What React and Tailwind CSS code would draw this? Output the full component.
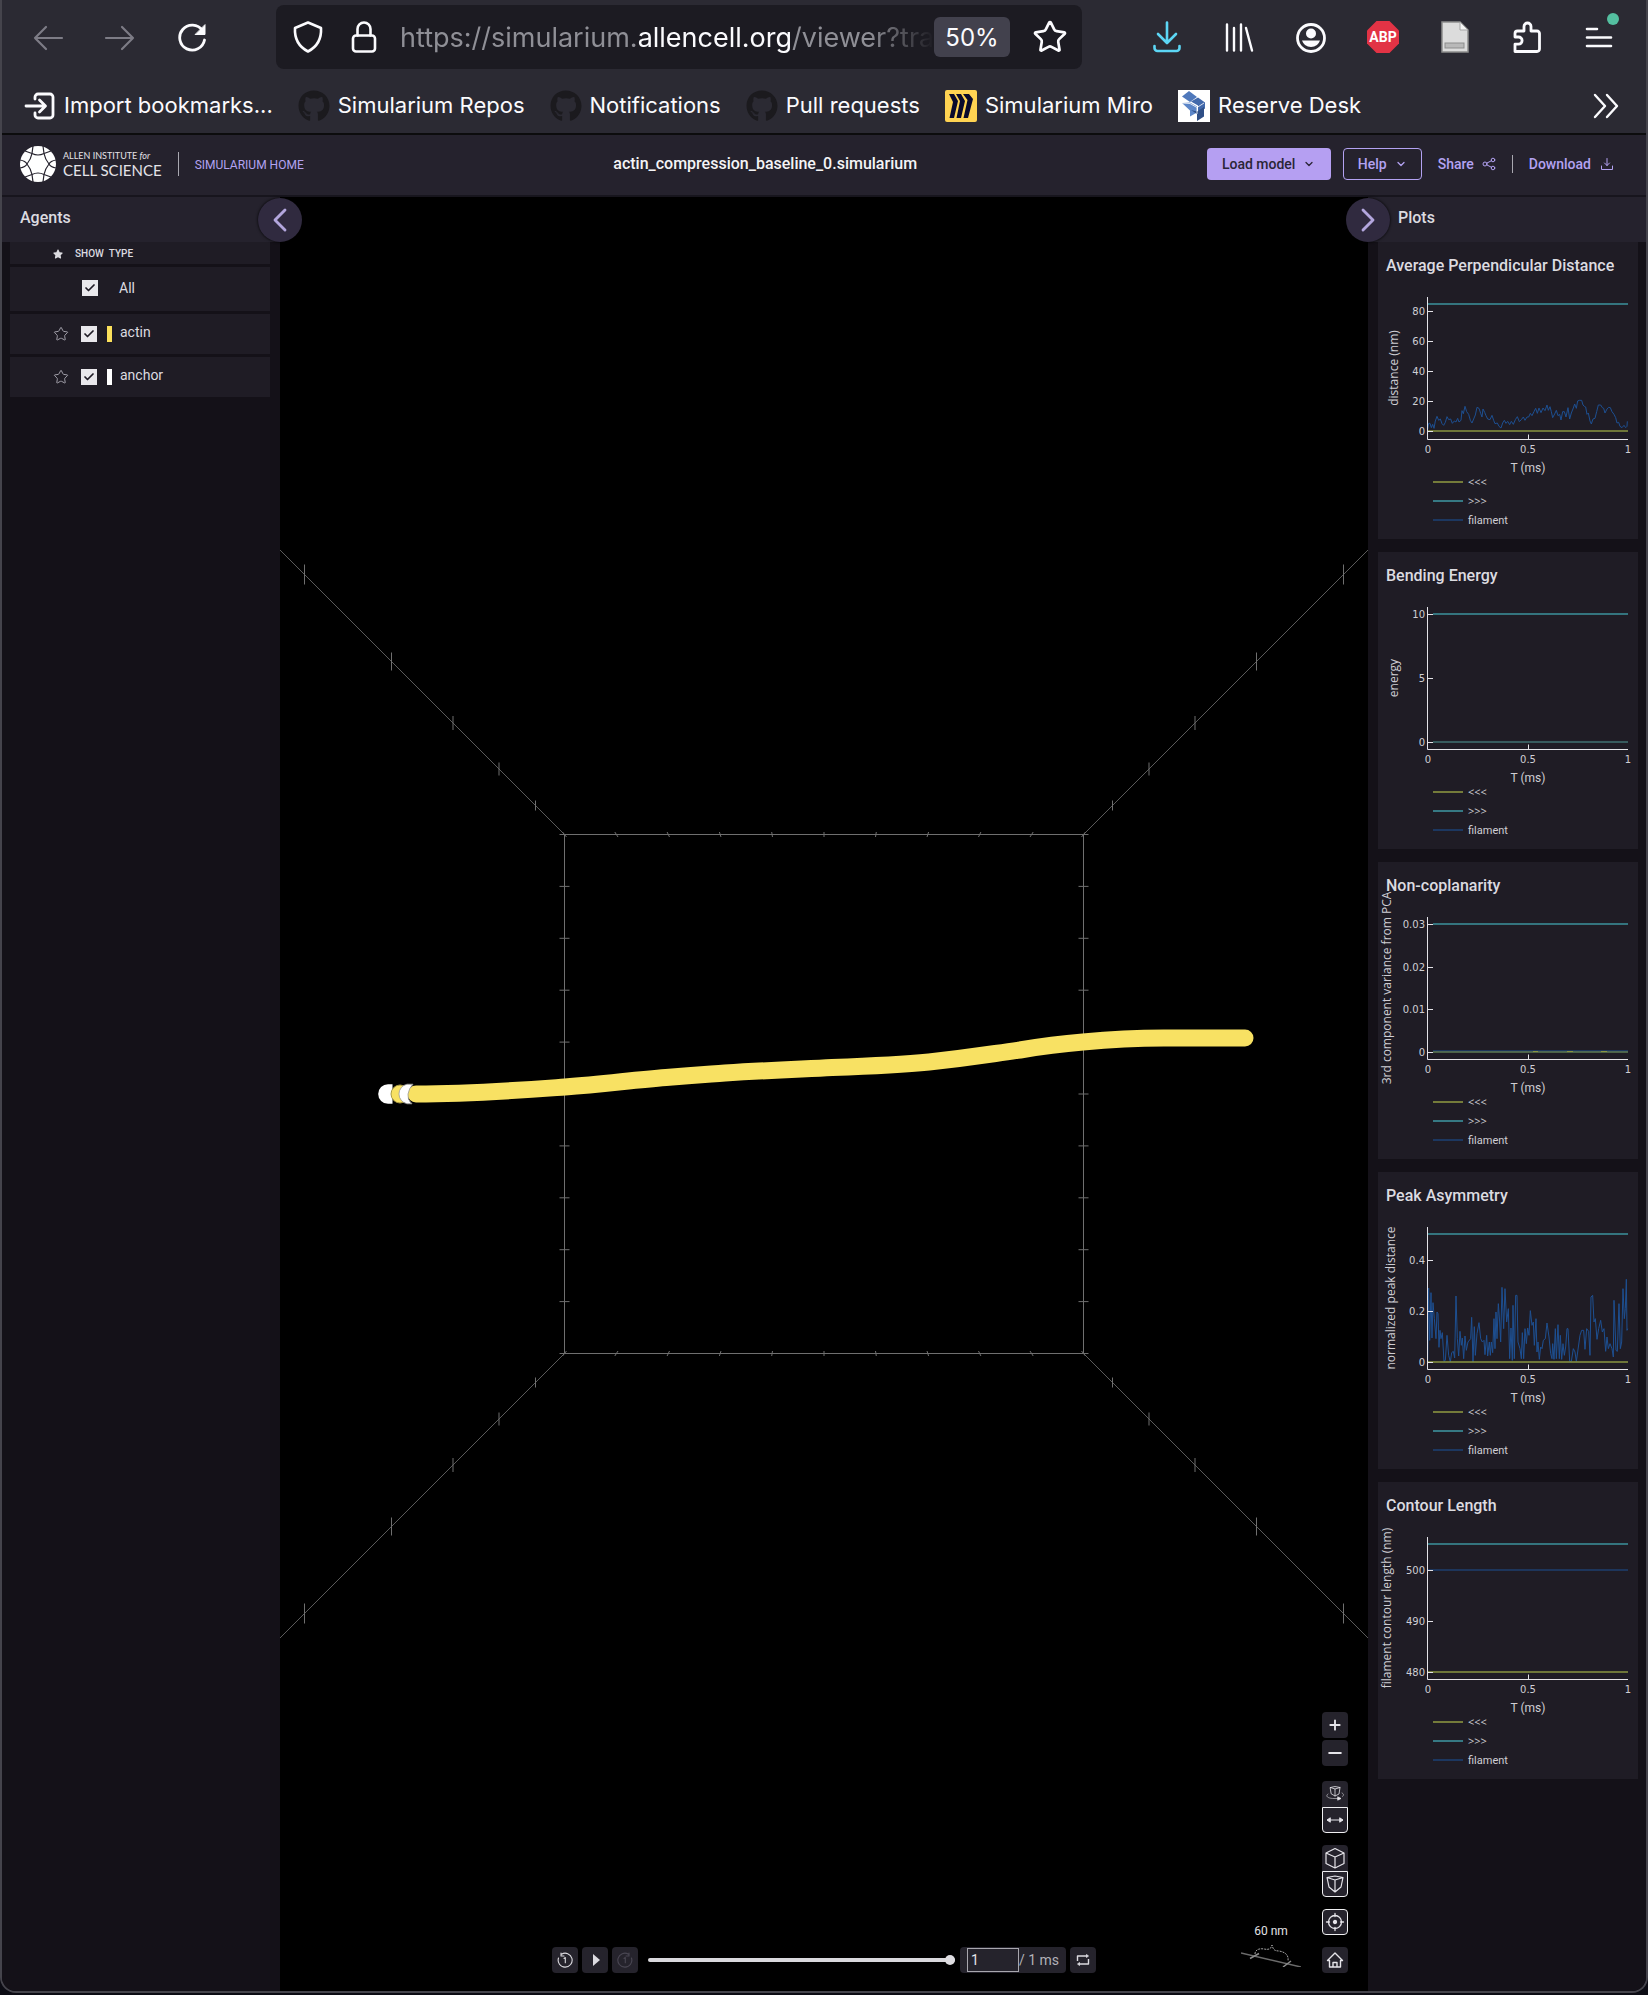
import React from "react";
import { Star, Check, ChevronDown, ChevronLeft, ChevronRight, Plus, Minus } from "lucide-react";
import { FaStar, FaGithub } from "react-icons/fa";

const stroke = { fill: "none", stroke: "currentColor", strokeLinecap: "round", strokeLinejoin: "round" };

/* ---------- browser chrome ---------- */

function IconButton({ label, className = "", color = "text-[#fbfbfe]", children }) {
  return (
    <button type="button" aria-label={label} className={`relative flex size-8 shrink-0 items-center justify-center ${color} ${className}`}>
      {children}
    </button>
  );
}

function AddressBar() {
  return (
    <div className="ml-[68px] mr-[69px] flex h-16 min-w-0 flex-1 items-center rounded-lg bg-[#1c1b22] px-4">
      <IconButton label="Tracking protection">
        <svg viewBox="0 0 32 32" className="size-8" {...stroke} strokeWidth="2.6">
          <path d="M16 1.500 29 7c.6 10-3.500 18.500-13 23.500C6.500 25.500 2.400 17 3 7Z" />
        </svg>
      </IconButton>
      <IconButton label="Connection secure" className="ml-6">
        <svg viewBox="0 0 32 32" className="size-8" {...stroke} strokeWidth="2.6">
          <rect x="5" y="14.500" width="22" height="16" rx="3" />
          <path d="M9.500 14.500V8a6.500 6.500 0 0 1 13 0v6.500" />
        </svg>
      </IconButton>
      <div
        role="textbox"
        aria-label="Address"
        className="ml-5 min-w-0 flex-1 overflow-hidden whitespace-nowrap pt-[2px] text-[27px] leading-10 text-[#8f8f96] [mask-image:linear-gradient(to_right,black_88%,transparent)]"
      >
        https://simularium.<span className="text-[#fbfbfe]">allencell.org</span>/viewer?tra
      </div>
      <button type="button" className="h-10 w-[76px] shrink-0 rounded-md bg-[#42414d] pt-[2px] text-2xl text-[#fbfbfe]">50%</button>
      <IconButton label="Bookmark this page" className="ml-6">
        <Star className="size-9 shrink-0" strokeWidth={1.800} />
      </IconButton>
    </div>
  );
}

function Toolbar() {
  return (
    <div className="flex items-center pl-[30px] pr-[31px]">
      <div className="flex gap-10">
        <IconButton label="Back" color="text-[#7d7c86]">
          <svg viewBox="0 0 32 32" className="size-8" {...stroke} strokeWidth="2.200"><path d="M30 17H3M14 6 3 17l11 11" /></svg>
        </IconButton>
        <IconButton label="Forward" color="text-[#7d7c86]">
          <svg viewBox="0 0 32 32" className="size-8" {...stroke} strokeWidth="2.200"><path d="M2 17h27M18 6l11 11-11 11" /></svg>
        </IconButton>
        <IconButton label="Reload">
          <svg viewBox="0 0 32 32" className="size-8" {...stroke} strokeWidth="2.800">
            <path d="M26.500 9.500A12.500 12.500 0 1 0 28.500 19" />
            <path d="M29 4v9.500h-9.500Z" fill="currentColor" strokeWidth="1" />
          </svg>
        </IconButton>
      </div>
      <AddressBar />
      <div className="flex gap-10">
        <IconButton label="Downloads" color="text-[#5cd6f5]">
          <svg viewBox="0 0 32 32" className="size-8" {...stroke} strokeWidth="2.600">
            <path d="M16 1.500v20M7 13l9 9 9-9M3.500 25v2a3 3 0 0 0 3 3h19a3 3 0 0 0 3-3v-2" />
          </svg>
        </IconButton>
        <IconButton label="Library">
          <svg viewBox="0 0 32 32" className="size-8" {...stroke} strokeWidth="2.400">
            <path d="M4 3.500v26M11 7v22.500M18 3.500v26M23 7l6 22.500" />
          </svg>
        </IconButton>
        <IconButton label="Account">
          <svg viewBox="0 0 32 32" className="size-8">
            <circle cx="16" cy="17" r="13.500" fill="none" stroke="currentColor" strokeWidth="2.800" />
            <circle cx="16" cy="12.500" r="5" fill="currentColor" />
            <path d="M7 19.500h18a9.500 9.500 0 0 1-18 0Z" fill="currentColor" />
          </svg>
        </IconButton>
        <IconButton label="Adblock Plus">
          <svg viewBox="0 0 32 32" className="size-8">
            <path d="M9.500 0h13L32 9.500v13L22.500 32h-13L0 22.500v-13Z" fill="#e23345" />
            <text x="16" y="21" textAnchor="middle" fontSize="14" fontWeight="700" fill="#fff" fontFamily="'Roboto'">ABP</text>
          </svg>
        </IconButton>
        <IconButton label="Reader extension">
          <svg viewBox="0 0 32 32" className="size-8">
            <path d="M3 1h18l8 8v22H3Z" fill="#dcdcdc" stroke="#8d8d8d" strokeWidth="1.500" />
            <path d="M21 1v8h8Z" fill="#f6f6f6" stroke="#a5a5a5" />
            <rect x="6" y="22" width="19" height="5" fill="#b9b9b9" stroke="#8d8d8d" />
          </svg>
        </IconButton>
        <IconButton label="Extensions">
          <svg viewBox="0 0 32 32" className="size-8" {...stroke} strokeWidth="2.800">
            <path d="M4 30.500h22a2.500 2.500 0 0 0 2.500-2.500V12.500A2.500 2.500 0 0 0 26 10h-6V5.500a3.500 3.500 0 0 0-7 0V10H6.500A2.500 2.500 0 0 0 4 12.500V16h3.500a3.600 3.600 0 0 1 0 7.200H4Z" />
          </svg>
        </IconButton>
        <IconButton label="Open application menu">
          <svg viewBox="0 0 32 32" className="size-8" {...stroke} strokeWidth="2.600">
            <path d="M4 8h10M4 16.500h24M4 25h24" />
          </svg>
          <span className="absolute -right-1 -top-2 size-3 rounded-full bg-[#54bfa0]" />
        </IconButton>
      </div>
    </div>
  );
}

function MiroIcon() {
  return (
    <svg viewBox="0 0 32 32" className="size-8 shrink-0">
      <rect width="32" height="32" rx="2" fill="#ffd352" />
      <g fill="#0a0a2c">
        <path d="M4 4h5l4 7-4 17H4.500L8 12Z" />
        <path d="M11 4h5l4 7-4 17h-4.500L15 11Z" />
        <path d="M18 4h6l4 5-5 19h-4.500L22.500 10Z" />
      </g>
    </svg>
  );
}

function DeskIcon() {
  return (
    <svg viewBox="0 0 32 32" className="size-8 shrink-0">
      <rect width="32" height="32" fill="#fff" />
      <path d="m11 1 8 6-7 5-8-5.500Z" fill="#4f78bb" />
      <path d="m20 7.500 7 5v6l-7 5v-8l-7-4Z" fill="#4269ab" />
      <path d="m4 13 8-.500 7 4v6l-7 4v-6Z" fill="#5c86c8" />
      <path d="m13 20 6 4v7l7-4.500V17l-7 4.500Z" fill="#2f4f86" />
      <path d="m4 13 8 .500 7 4 7-4.500M19 17.500V24" stroke="#fff" strokeWidth=".8" fill="none" />
    </svg>
  );
}

function Bookmark({ icon, children }) {
  return (
    <a href="#" className="flex items-center gap-2 whitespace-nowrap">
      {icon}
      <span>{children}</span>
    </a>
  );
}

function Bookmarks() {
  const github = <FaGithub className="size-8 shrink-0 text-[#1b1a1e]" />;
  return (
    <nav aria-label="Bookmarks" className="mt-1 flex h-15 items-center gap-[25px] pl-[22px] pr-[26px] pt-[5px] text-[22px] text-[#fbfbfe]">
      <Bookmark
        icon={
          <svg viewBox="0 0 32 32" className="size-8 shrink-0" {...stroke} strokeWidth="2.800">
            <path d="M11 9V7a3 3 0 0 1 3-3h12a3 3 0 0 1 3 3v18a3 3 0 0 1-3 3H14a3 3 0 0 1-3-3v-2M2 16h19M15.500 10l6 6-6 6" />
          </svg>
        }
      >
        Import bookmarks...
      </Bookmark>
      <Bookmark icon={github}>Simularium Repos</Bookmark>
      <Bookmark icon={github}>Notifications</Bookmark>
      <Bookmark icon={github}>Pull requests</Bookmark>
      <Bookmark icon={<MiroIcon />}>Simularium Miro</Bookmark>
      <Bookmark icon={<DeskIcon />}>Reserve Desk</Bookmark>
      <button type="button" aria-label="More bookmarks" className="ml-auto">
        <svg viewBox="0 0 28 28" className="size-7" {...stroke} strokeWidth="2.400">
          <path d="M3 3l10 11L3 25M15 3l10 11-10 11" />
        </svg>
      </button>
    </nav>
  );
}

/* ---------- application header ---------- */

function AllenLogo() {
  return (
    <svg viewBox="0 0 36 36" className="size-9 shrink-0">
      <circle cx="18" cy="18" r="18" fill="#fff" />
      <g fill="none" stroke="#25222d" strokeWidth="1.200">
        <path d="M12 7.500Q18 10.500 24 7.500M12 28.500Q18 25.500 24 28.500" />
        <path d="M12 7.500Q11 13 7 18Q11 23 12 28.500M24 7.500Q25 13 29 18Q25 23 24 28.500" />
        <path d="M12 7.500 13 0M24 7.500 23 0M12 28.500 13 36M24 28.500 23 36" />
        <path d="M12 7.500 5 5M24 7.500 31 5M12 28.500 5 31M24 28.500 31 31" />
        <path d="M7 18Q5.500 15 0 14M7 18Q5.500 21 0 22M29 18Q30.500 15 36 14M29 18Q30.500 21 36 22" />
      </g>
    </svg>
  );
}

function AppHeader() {
  return (
    <header className="flex h-[62px] items-center border-b-2 border-[#17151d] bg-[#25222d] pb-[2px] pl-[18px] pr-[33px] text-sm text-[#b3a2f2]">
      <a href="#" className="flex items-center gap-[7px] font-['Lato'] text-[#e4e3e8]">
        <AllenLogo />
        <span className="flex flex-col whitespace-nowrap">
          <span className="text-[9px] leading-3">ALLEN INSTITUTE <i>for</i></span>
          <span className="text-[15px] leading-4">CELL SCIENCE</span>
        </span>
      </a>
      <span className="ml-4 h-6 w-px bg-[#a9a8b0]" />
      <a href="#" className="ml-4 whitespace-nowrap pt-[2px] text-xs">SIMULARIUM HOME</a>
      <h1 className="min-w-0 flex-1 truncate pl-5 text-center text-base font-medium text-[#f4f4f6]">actin_compression_baseline_0.simularium</h1>
      <button type="button" className="flex h-8 w-[124px] items-center justify-center gap-2 rounded-sm bg-[#b59ff2] font-medium text-[#2a2536]">
        Load model <ChevronDown className="size-3" strokeWidth={2.600} />
      </button>
      <button type="button" className="ml-3 flex h-8 w-[79px] items-center justify-center gap-2 rounded-sm border border-[#b3a2f2] font-medium">
        Help <ChevronDown className="size-3" strokeWidth={2.600} />
      </button>
      <button type="button" className="ml-4 flex items-center gap-2 font-medium">
        Share
        <svg viewBox="0 0 14 14" className="size-[14px]" {...stroke}>
          <circle cx="3" cy="7" r="2" /><circle cx="11" cy="3" r="1.800" /><circle cx="11" cy="11" r="1.800" /><path d="m5 6 4.500-2.300M5 8l4.500 2.300" />
        </svg>
      </button>
      <span className="ml-4 h-[18px] w-px bg-[#a9a8b0]" />
      <button type="button" className="ml-4 flex items-center gap-[10px] font-medium">
        Download
        <svg viewBox="0 0 12 12" className="size-3" {...stroke}>
          <path d="M6 .500V7.500M3.500 5 6 7.500 8.500 5M.500 8v3.500h11V8" />
        </svg>
      </button>
    </header>
  );
}

/* ---------- agents panel ---------- */

function Tick({ label }) {
  return (
    <span className="grid size-4 shrink-0">
      <input id={label} type="checkbox" defaultChecked className="col-start-1 row-start-1 size-4 appearance-none bg-[#e9e8ec]" />
      <Check className="pointer-events-none col-start-1 row-start-1 m-auto size-3 text-[#1f1c26]" strokeWidth={3.500} />
    </span>
  );
}

function AgentRow({ name, color }) {
  return (
    <li className="flex h-10 items-center bg-[#1f1c25] pl-[43px]">
      <button type="button" aria-label={`Favorite ${name}`} className="text-[#a09ea8]">
        <Star className="size-4" strokeWidth={1.500} />
      </button>
      <span className="ml-3 flex"><Tick label={name} /></span>
      <span className={`ml-[10px] h-4 w-[5px] ${color}`} />
      <label htmlFor={name} className="ml-2 pb-1">{name}</label>
    </li>
  );
}

function AgentsPanel() {
  return (
    <aside className="w-[278px] shrink-0 bg-[#141118] text-sm text-[#dcdbe0]">
      <h2 className="flex h-[45px] items-center bg-[#25222d] pb-1 pl-[18px] text-base font-medium">Agents</h2>
      <div className="flex flex-col gap-[3px] pl-2 pr-[10px]">
        <div className="flex h-[22px] items-center bg-[#1f1c25] pl-[43px] pt-[2px] text-[10px] font-medium">
          <FaStar className="size-[10px]" />
          <span className="ml-3">SHOW</span>
          <span className="ml-[5px]">TYPE</span>
        </div>
        <div className="flex h-11 items-center bg-[#1f1c25] pb-[2px] pl-[72px]">
          <Tick label="All" />
          <label htmlFor="All" className="ml-[21px]">All</label>
        </div>
        <ul className="flex flex-col gap-[3px]">
          <AgentRow name="actin" color="bg-[#fbe05b]" />
          <AgentRow name="anchor" color="bg-white" />
        </ul>
      </div>
    </aside>
  );
}

/* ---------- 3D viewport ---------- */

const CORNER_TICKS = [[519.500, 10], [432.500, 9], [371, 7], [325, 6.500], [288.500, 5]];

function Scene() {
  const h = 259.500;
  const side = [];
  for (let i = 0; i <= 10; i++) side.push(-h + i * 51.900);
  return (
    <svg viewBox="-544 -897 1088 1794" preserveAspectRatio="xMidYMid slice" className="absolute inset-0 h-full w-full" role="img" aria-label="Simulation volume with an actin filament">
      <g stroke="#6f6f6f" strokeWidth="1" fill="none">
        <rect x={-h} y={-h} width={2 * h} height={2 * h} />
        {[[-1, -1], [1, -1], [-1, 1], [1, 1]].map(([sx, sy]) => (
          <g key={`${sx}${sy}`}>
            <path d={`M${sx * h} ${sy * h}L${sx * 544} ${sy * 544}`} stroke="#5a5a5a" />
            {CORNER_TICKS.map(([d, r]) => (
              <path key={d} d={`M${sx * d} ${sy * d - r}v${2 * r}`} />
            ))}
          </g>
        ))}
        {side.map((p) => (
          <g key={p}>
            <path d={`M${-h - 5} ${p}h10M${h - 5} ${p}h10`} />
            <path d={`M${p + p / 130} ${-h - 2.500}L${p - p / 130} ${-h + 2.500}M${p + p / 130} ${h + 2.500}L${p - p / 130} ${h - 2.500}`} />
          </g>
        ))}
      </g>
      <path d="M-436-9.800a9.800 9.800 0 0 0 0 19.600h4.500v-19.600Z" fill="#fff" />
      <circle cx="-424" cy="0" r="9" fill="#f8e163" stroke="#a89a45" />
      <path
        d="M-408 0C-350 0-300-4-259-7C-220-10-190-14-158-16.500C-130-19-120-19.500-99-21C-50-24-20-25 8-26.500C50-28 75-29 105-32C150-37 160-39 196-44C225-49 240-50.500 259-52C290-55 310-56 340-56H421"
        fill="none" stroke="#f8e163" strokeWidth="17" strokeLinecap="round"
      />
      <path d="M-417-9.800a10 10 0 0 0 0 19.600h5q-5-4-4-9.800t5-9.800Z" fill="#fff" stroke="#9b9b9b" strokeWidth=".8" />
    </svg>
  );
}

function ViewButton({ label, active, children, shape = "rounded-sm" }) {
  return (
    <button type="button" aria-label={label} className={`flex size-[26px] items-center justify-center bg-[#25232c] text-[#e6e5ea] ${shape} ${active ? "border border-[#f0f0f2]" : ""}`}>
      {children}
    </button>
  );
}

function ViewControls() {
  return (
    <div className="absolute bottom-[18px] right-5 flex flex-col gap-3">
      <div className="mb-[3px] flex flex-col gap-[2px]">
        <ViewButton label="Zoom in"><Plus className="size-4" strokeWidth={2.800} /></ViewButton>
        <ViewButton label="Zoom out"><Minus className="size-5" strokeWidth={2.400} /></ViewButton>
      </div>
      <div className="flex flex-col">
        <ViewButton label="Rotate" shape="rounded-t-sm">
          <svg viewBox="0 0 20 20" className="size-5" {...stroke} strokeWidth=".8">
            <path d="M5.500 3.500 10 2.500l5 1-1 6.500-4 2-3.500-2ZM5.500 3.500l4.500 1.500 5-1.500M10 5v7" />
            <path d="M3 10c-3 2-.500 4.500 6 4.500h4M17 9c2 1 2 2 .5 3.500" opacity=".7" />
            <path d="m13 13 3 1.500-3 1.500Z" fill="currentColor" />
          </svg>
        </ViewButton>
        <ViewButton label="Pan" active shape="rounded-b-sm">
          <svg viewBox="0 0 20 20" className="size-5" {...stroke} strokeWidth="1">
            <path d="M3 10h14" /><path d="m5 8L2 10l3 2ZM15 8l3 2-3 2Z" fill="currentColor" />
          </svg>
        </ViewButton>
      </div>
      <div className="flex flex-col">
        <ViewButton label="Orthographic camera" shape="rounded-t-sm">
          <svg viewBox="0 0 22 22" className="size-[22px]" {...stroke} strokeWidth="1.200">
            <path d="M2 6 11 1.500 20 6v10.500l-9 4.500-9-4.500ZM2 6l9 4 9-4M11 10v11" />
          </svg>
        </ViewButton>
        <ViewButton label="Perspective camera" active shape="rounded-b-sm">
          <svg viewBox="0 0 20 20" className="size-5" {...stroke} strokeWidth="1.200">
            <path d="M2 3.500 10 2l8 1.500-2 9.500-6 5-6-5ZM2 3.500 10 6l8-2.500M10 6v12" />
          </svg>
        </ViewButton>
      </div>
      <ViewButton label="Focus" active>
        <svg viewBox="0 0 20 20" className="size-5" {...stroke} strokeWidth="1.300">
          <circle cx="10" cy="10" r="6.500" /><circle cx="10" cy="10" r="1.500" fill="currentColor" />
          <path d="M10 1.500v3M10 15.500v3M1.500 10h3M15.500 10h3" />
        </svg>
      </ViewButton>
      <ViewButton label="Home view">
        <svg viewBox="0 0 18 18" className="size-[18px]" {...stroke} strokeWidth="1.400">
          <path d="M1.500 9.500 9 2l7.500 7.500h-2V16h-11V9.500ZM7 16v-4.500h4V16" />
        </svg>
      </ViewButton>
    </div>
  );
}

function ScaleBar() {
  return (
    <div className="absolute bottom-6 right-[67px] flex flex-col items-center text-xs text-[#e2e2e6]">
      60 nm
      <svg viewBox="0 0 60 24" className="mt-1 h-6 w-[60px]" {...stroke} strokeLinecap="butt">
        <path d="M0 10 60 24" stroke="#6b6b6b" strokeWidth="1.500" />
        <path d="M9 15.500l9-5M42 24l8-6" stroke="#8b8b8b" strokeWidth="1.500" />
        <path d="M14 11c0-4 4-6 9-5 5 1 7 0 8-4 1 4 2 6 7 6 6 1 10 4 9 10" stroke="#a5a5a5" strokeDasharray="2 1" />
      </svg>
    </div>
  );
}

function StepIcon({ flip }) {
  return (
    <svg viewBox="0 0 16 16" className="size-4" {...stroke} strokeWidth="1.100">
      <path d={flip ? "M11.500 2.200A7 7 0 1 0 14.500 6M12 1v3H9" : "M4.500 2.200A7 7 0 1 1 1.500 6M4 1v3h3"} />
      <path d="M7 6.500 8.300 5.500v5.300" />
    </svg>
  );
}

function PlaybackControls() {
  const box = "flex size-[26px] shrink-0 items-center justify-center rounded-sm bg-[#25232c] text-[#dcdbe0]";
  return (
    <div className="absolute inset-x-0 bottom-[18px] flex justify-center gap-1 text-sm">
      <button type="button" aria-label="Step back" className={box}><StepIcon /></button>
      <button type="button" aria-label="Play" className={box}>
        <svg viewBox="0 0 10 12" className="ml-px h-3 w-[10px]" fill="currentColor"><path d="M2 0 9 6 2 12Z" /></svg>
      </button>
      <button type="button" aria-label="Step forward" disabled className="flex size-[26px] shrink-0 items-center justify-center rounded-sm bg-[#25232c] text-[#4a4753]"><StepIcon flip /></button>
      <input
        type="range" aria-label="Time" min="0" max="1" step="0.01" defaultValue="1"
        className="my-auto ml-[6px] mr-px h-1 w-[307px] appearance-none rounded-full bg-[#d9d8dc] [&::-webkit-slider-thumb]:size-[10px] [&::-webkit-slider-thumb]:appearance-none [&::-webkit-slider-thumb]:rounded-full [&::-webkit-slider-thumb]:bg-[#dedde1]"
      />
      <div className="flex h-[26px] w-[106px] items-center rounded-sm bg-[#25232c] pl-[7px] text-[#b2b1b8]">
        <input aria-label="Current time" defaultValue="1" className="h-6 w-[52px] border border-[#a8a7ae] bg-transparent px-[3px] text-[#e6e5ea]" />
        <span className="whitespace-nowrap">/ 1 ms</span>
      </div>
      <button type="button" aria-label="Loop" className={box}>
        <svg viewBox="0 0 14 14" className="size-[14px]" {...stroke} strokeWidth="1.400" strokeLinecap="butt">
          <path d="M1.500 8V3H11M12.500 6v5H3" />
          <path d="m10.500 1.500 2 1.500-2 1.500ZM3.500 9.500l-2 1.500 2 1.500Z" fill="currentColor" strokeWidth=".8" />
        </svg>
      </button>
    </div>
  );
}

function CollapseButton({ label, className, children }) {
  return (
    <button type="button" aria-label={label} className={`absolute top-px z-10 flex size-11 items-center justify-center rounded-full bg-[#302a3f] text-[#b3a6dd] shadow-[0_0_3px_#000] ${className}`}>
      {children}
    </button>
  );
}

function Viewport() {
  return (
    <main className="relative min-h-[900px] min-w-0 flex-1 bg-black">
      <Scene />
      <CollapseButton label="Collapse agents" className="-left-[22px]"><ChevronLeft className="size-10 shrink-0" strokeWidth={1.700} /></CollapseButton>
      <CollapseButton label="Collapse plots" className="-right-[22px]"><ChevronRight className="size-10 shrink-0" strokeWidth={1.700} /></CollapseButton>
      <ScaleBar />
      <ViewControls />
      <PlaybackControls />
    </main>
  );
}

/* ---------- plots panel ---------- */

const OLIVE = "#8a9440";
const TEAL = "#3d929d";
const BLUE = "#1d4f92";

/* Traces are sampled on a grid three times as fine as the plot's own units. */
const DISTANCE_TRACE =
  "203,722 206,703 210,703 214,716 218,706 222,718 226,696 231,682 236,694 241,690 246,704 251,709 256,700 261,683 266,692 272,690 277,703 283,696 288,699 293,688 297,699 303,694 306,665 310,674 315,652 320,668 326,676 331,694 336,702 341,690 346,678 351,655 357,658 362,673 366,684 369,660 374,670 378,680 383,690 390,692 396,679 401,694 405,704 412,702 417,712 423,717 428,702 433,694 438,703 443,697 449,707 454,697 460,706 466,692 472,683 478,698 484,692 490,684 495,694 501,684 506,684 511,673 516,680 522,668 527,658 532,673 537,657 543,671 549,657 555,665 561,648 565,664 570,653 574,668 578,686 584,675 589,664 594,680 599,676 603,693 608,668 613,668 618,684 624,656 629,690 634,672 640,657 644,645 649,658 653,636 658,634 665,634 669,648 673,652 677,654 681,676 685,672 690,696 694,705 699,690 705,688 710,668 715,648 722,648 727,656 731,658 735,672 741,660 746,655 751,656 756,668 762,676 767,686 771,702 776,700 780,712 786,716 792,709 797,716 801,712 802,697";

const ASYMMETRY_TRACE =
  "203,600 206,378 209,535 213,392 216,528 219,422 223,470 228,530 231,450 234,455 237,556 240,505 243,530 247,512 252,598 256,595 261,520 266,580 271,600 275,572 280,568 284,588 288,402 292,530 296,582 300,508 304,550 307,528 311,590 315,522 319,565 324,540 332,530 335,466 339,600 343,494 346,580 351,515 357,482 362,530 367,540 372,535 375,578 380,520 383,582 388,540 391,580 394,540 398,572 402,470 405,560 408,450 411,530 415,425 419,480 422,540 426,376 431,500 435,380 440,480 445,440 449,590 453,498 457,595 459,430 463,590 467,400 471,400 474,540 480,560 484,590 487,512 491,590 495,500 499,545 503,498 507,520 511,446 516,490 520,480 523,550 528,470 531,570 534,540 538,592 542,555 546,560 550,535 556,530 561,483 567,525 572,575 576,590 578,545 582,592 586,500 589,590 594,488 598,590 601,520 605,592 609,545 613,580 617,555 621,500 624,500 629,598 634,598 640,560 645,570 649,598 653,570 660,520 665,505 671,505 675,562 680,500 686,508 690,580 693,405 698,400 702,480 706,470 711,532 716,500 722,475 727,510 732,500 737,568 741,525 745,560 750,545 756,560 760,585 762,415 768,565 772,568 777,425 781,560 785,540 789,380 793,470 796,440 799,352 801,505 803,500";

const PLOTS = [
  {
    title: "Average Perpendicular Distance", yLabel: "distance (nm)", labelX: 20,
    ticks: [["80", 69], ["60", 99], ["40", 129], ["20", 159], ["0", 189]],
    lines: [[OLIVE, 189], [TEAL, 62]], trace: DISTANCE_TRACE, offset: "translate(-18 -53) scale(.33333)", inset: 0,
  },
  {
    title: "Bending Energy", yLabel: "energy", labelX: 20,
    ticks: [["10", 62], ["5", 126], ["0", 190]], lines: [["#416f70", 190], [TEAL, 62]], inset: 5,
  },
  {
    title: "Non-coplanarity", yLabel: "3rd component variance from PCA", labelX: 13,
    ticks: [["0.03", 62], ["0.02", 105], ["0.01", 147], ["0", 190]],
    lines: [[BLUE, 189], ["#5e7a55", 190], [TEAL, 62]], inset: 5, bumps: true,
  },
  {
    title: "Peak Asymmetry", yLabel: "normalized peak distance", labelX: 17,
    ticks: [["0.4", 88], ["0.2", 139], ["0", 190]], lines: [[OLIVE, 190], [TEAL, 62]],
    trace: ASYMMETRY_TRACE, offset: "translate(-18 -10) scale(.33333)", inset: 0,
  },
  {
    title: "Contour Length", yLabel: "filament contour length (nm)", labelX: 13,
    ticks: [["500", 88], ["490", 139], ["480", 190]], lines: [[OLIVE, 190], [TEAL, 62], [BLUE, 88]], inset: 0,
  },
];

function Plot({ plot }) {
  return (
    <section className="relative h-[297px] bg-[#1f1c25]">
      <h3 className="absolute left-2 top-3 text-base font-medium text-[#dcdbe0]">{plot.title}</h3>
      <svg viewBox="0 0 260 297" className="h-[297px] w-full" role="img" aria-label={plot.title} fill="#cfced4" fontSize="12">
        <text x={plot.labelX} y="126" textAnchor="middle" fontFamily="'Open Sans'" transform={`rotate(-90 ${plot.labelX} 126)`}>{plot.yLabel}</text>
        {plot.trace && <polyline points={plot.trace} transform={plot.offset} fill="none" stroke={BLUE} strokeWidth="3" />}
        {plot.lines.map(([color, y]) => (
          <path key={y} d={`M${50 + plot.inset} ${y}H250`} stroke={color} strokeWidth={color === BLUE ? 1 : 1.600} />
        ))}
        {plot.bumps && <path d="M155 189.500h5M189 189.500h6M223 189.500h6" stroke={OLIVE} />}
        <path d="M49.500 55V197.500H250M150.500 192.500v5" fill="none" stroke="#e4e3e8" />
        <g fontFamily="'DejaVu Sans'" fontSize="10">
          {plot.ticks.map(([label, y]) => (
            <g key={label}>
              <path d={`M50 ${y + 0.500}h5`} stroke="#e4e3e8" />
              <text x="47" y={y + 4} textAnchor="end">{label}</text>
            </g>
          ))}
          <g textAnchor="middle">
            <text x="50" y="211">0</text>
            <text x="150" y="211">0.5</text>
            <text x="250" y="211">1</text>
          </g>
        </g>
        <text x="150" y="230" textAnchor="middle">T (ms)</text>
        {[["<<<", OLIVE, 240], [">>>", TEAL, 259], ["filament", "#1c3f70", 278]].map(([name, color, y]) => (
          <g key={name} fontSize="11">
            <path d={`M55 ${y}h30`} stroke={color} strokeWidth="1.600" />
            <text x="90" y={y + 4} fontFamily={name === "filament" ? "'Roboto'" : "'Open Sans'"}>{name}</text>
          </g>
        ))}
      </svg>
    </section>
  );
}

function PlotsPanel() {
  return (
    <aside className="w-[278px] shrink-0 bg-[#141118]">
      <h2 className="flex h-[45px] items-center bg-[#25222d] pb-1 pl-[30px] text-base font-medium text-[#dcdbe0]">Plots</h2>
      <div className="flex flex-col gap-[13px] pl-[10px] pr-2">
        {PLOTS.map((plot) => <Plot key={plot.title} plot={plot} />)}
      </div>
    </aside>
  );
}

export default function App() {
  return (
    <div className="flex min-h-screen flex-col bg-[#0c0c14] pb-[2px]">
      <div className="flex flex-1 flex-col overflow-hidden rounded-b-2xl border-x-2 border-b-2 border-[#45444c] font-['Roboto',sans-serif]">
        <div className="border-b-2 border-[#0c0c0d] bg-[#2b2a33] pt-[5px] font-['Inter',sans-serif]">
          <Toolbar />
          <Bookmarks />
        </div>
        <AppHeader />
        <div className="flex flex-1">
          <AgentsPanel />
          <Viewport />
          <PlotsPanel />
        </div>
      </div>
    </div>
  );
}
